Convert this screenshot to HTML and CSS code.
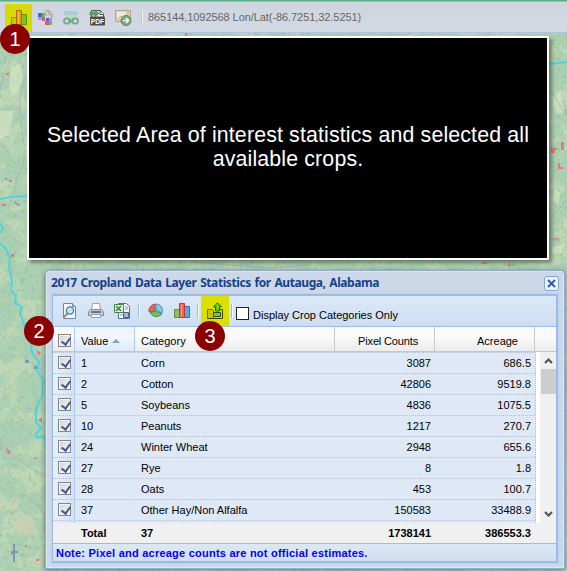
FILE: index.html
```html
<!DOCTYPE html>
<html lang="en">
<head>
<meta charset="utf-8">
<title>Cropland Data Layer Statistics</title>
<link rel="stylesheet" href="styles.css">
</head>
<body>
<svg class="map" viewBox="0 0 567 571" width="567" height="571" aria-hidden="true">
  <defs>
    <filter id="land" x="0" y="0" width="100%" height="100%" color-interpolation-filters="sRGB">
      <feTurbulence type="fractalNoise" baseFrequency=".045" numOctaves="5" seed="8"/>
      <feColorMatrix values="0 0 0 0 .84  0 0 0 0 .88  0 0 0 0 .72  8 0 0 0 -3.9"/>
    </filter>
    <filter id="speck" x="0" y="0" width="100%" height="100%" color-interpolation-filters="sRGB">
      <feTurbulence type="fractalNoise" baseFrequency=".28" numOctaves="3" seed="21"/>
      <feColorMatrix values="0 0 0 0 .6  0 0 0 0 .68  0 0 0 0 .67  0 9 0 0 -5.2"/>
    </filter>
    <filter id="leaf" x="0" y="0" width="100%" height="100%" color-interpolation-filters="sRGB">
      <feTurbulence type="fractalNoise" baseFrequency=".13" numOctaves="4" seed="4"/>
      <feColorMatrix values="0 0 0 0 .64  0 0 0 0 .82  0 0 0 0 .63  0 0 8 0 -4.4"/>
    </filter>
  </defs>
  <rect width="567" height="571" fill="#acd0b3"/>
  <rect width="567" height="571" filter="url(#land)" opacity=".45"/>
  <rect width="567" height="571" filter="url(#leaf)" opacity=".4"/>
  <rect width="567" height="571" filter="url(#speck)" opacity=".35"/>
  <g fill="#d3e2c0" opacity=".75">
    <path d="M12 66l8-2 3 12-4 14-6 6-4-10zM0 111h14l-2 10-4 14-8 4zM553 96l8-6 3 22-6 2-5-6zM555 190l5 2-1 12-6-2zM552 248l12-5-2 10-10 1z"/>
  </g>
  <g fill="#cdd0b3" opacity=".7">
    <path d="M15 520l10-4 9 4 1 12-10 5-9-7zM12 498l8-2-2 12-6 2z"/>
  </g>
  <g fill="none" stroke="#a9a7ae" opacity=".65">
    <path d="M10 60Q2 75 0 90M26 75Q16 95 22 130T18 175L8 210M0 442l14 14 16 12 18 9M12 505q8-18 22-4t10 30M550 90l12 18 5 8M553 215l14-15M190 262l80 6 40-3"/>
  </g>
  <g fill="none" stroke="#4fd4db">
    <path stroke-width="2" d="M0 199l11-2 16-1M549 64l9-1 9-1"/>
    <path stroke-width="2" d="M0 224l3 4-2 5M0 243l6 6 4 9-1 10 3 12-1 11 5 4-1 8 7 4-2 6 4 11 5 12 2 9 1 8 7 9-2 8 6 10-1 17-6 11 0 14 5 6-5 6 1 4 5-2 5 7-2 4 4 10"/>
  </g>
  <g fill="#df7d7d">
    <path d="M6 73h3v2H6zM5 178h2v2H5zM9 180h3v2H9zM2 204h4v2H2zM11 254h3v3h-3zM6 448l5 4-3 3zM37 350l4 3-3 3zM38 420l4-3v6zM34 457l3 1-2 2zM485 261l3 3h-8zM507 266l2-4 3 4 2-4v4zM552 240q4-5 9 0l-3-1zM551 148h6v2h-2v3h-4zM561 142h3v8h-3zM558 163l2 0 0 4 3 0v2h-5zM25 545h2v2h-2zM36 559h3v2h-3zM185 33h2v3h-2z"/>
  </g>
  <path fill="#7f96b2" d="M15 202l5 3-1 1-5-3zM13 544h2v7h3v2h-3v9h-2v-8h-2v-3h2zM25 360h4v3h-4zM34 366h3v3h-3z"/>
</svg>

<header class="appbar">
  <span class="tool active"><svg width="18" height="18" viewBox="0 0 18 18"><path fill="#b9cf08" stroke="#8b9a00" d="M1.500 8.500h5v7h-5z"/><path fill="#85bf22" stroke="#5c9112" d="M11.500 5.500h5v10h-5z"/><path fill="#ec9d06" stroke="#bd6605" d="M6.500 1.500h5v14h-5z"/><path stroke="#f6ca38" d="M8.500 3v12"/></svg></span>
  <span class="tool"><svg width="18" height="18" viewBox="0 0 18 18"><path fill="#4864e8" d="M2 4h4v4H2zM10 9h3v3h-3z"/><path fill="#e8585c" d="M6 8h3v4H6zM9 12h4v4H9z"/><path fill="#5dbd62" d="M6 4h3v4H6zM13 12h3v4h-3z"/><path fill="#b98ae0" d="M2 8h4v3H2zM13 9h3v3h-3z"/><path fill="none" stroke="#b09a8a" d="M9 4q1-4 4-2.500l3 3v4l-2-4-2.500 2M11 1l3 4M9 5l2 1"/></svg></span>
  <span class="tool"><svg width="18" height="18" viewBox="0 0 18 18"><path fill="#a5cfd8" d="M2 2h14v5H2z"/><path fill="#c0dcc0" d="M2 6h14l-2 4H4z"/><g fill="#d4dce0" stroke="#79aa88" stroke-width="1.800"><rect x="2" y="9.500" width="6" height="5" rx="2.500"/><rect x="10" y="9.500" width="6" height="5" rx="2.500"/><path d="M6 12h6"/></g></svg></span>
  <span class="tool"><svg width="18" height="18" viewBox="0 0 18 18"><path fill="#eee" stroke="#555" d="M3.500 1.500h9l3 3.500V9h-12z"/><path fill="#ddd" stroke="#555" d="M12 1.500v4h4"/><rect x="2" y="7.500" width="15" height="9" rx="1" fill="#514a4b"/><path fill="#63a16a" stroke="#397943" stroke-width=".6" d="M2 3h5V1l4 3.500L7 8V6H2z"/><text x="2.800" y="14.800" class="pdf">PDF</text></svg></span>
  <span class="tool"><svg width="18" height="18" viewBox="0 0 18 18"><path fill="#ded3b9" stroke="#b3a58b" d="M1.500 1.500h15v11h-15z"/><path fill="#efe9db" d="M3 3h9v7H3z"/><path stroke="#c9a18b" fill="none" d="M3 11l4-4 3 3M12 4h3"/><circle cx="12" cy="11.500" r="5" fill="#79ad70" stroke="#4c8c57"/><path stroke="#fff" stroke-width="1.600" fill="none" d="M9 11.500h5M12 9l2.500 2.500L12 14"/></svg></span>
  <span class="split"></span>
  <span class="coords">865144,1092568 Lon/Lat(-86.7251,32.5251)</span>
</header>

<section class="banner"><p>Selected Area of interest statistics and selected all<br>available crops.</p></section>

<section class="window">
  <div class="titlebar"><h1>2017 Cropland Data Layer Statistics for Autauga, Alabama</h1>
    <button class="close" aria-label="Close"><svg width="9" height="9" viewBox="0 0 9 9"><path d="M1 1l7 7M8 1L1 8" stroke="#3455a4" stroke-width="1.800"/></svg></button></div>
  <div class="panel">
    <div class="toolbar">
      <span class="act"><svg width="16" height="16" viewBox="0 0 16 16"><path fill="#f5faff" stroke="#6788b5" d="M1.500.5h9l3 3v12h-12z"/><path fill="#b9d2ee" stroke="#6788b5" d="M10.500.5v3h3"/><path stroke="#bd8352" stroke-width="2.200" d="M6 10l-4.500 4.500"/><circle cx="8" cy="7.500" r="3.600" fill="#c4e6fa" stroke="#4778b4" stroke-width="1.300"/></svg></span>
      <span class="act"><svg width="16" height="16" viewBox="0 0 16 16"><path fill="#fff" stroke="#9ba1a8" d="M4.500.5h7l1 7h-9z"/><path fill="#c8c8c7" stroke="#888b8e" d="M2.500 6.500h11l2 2v4H.5v-4z"/><path fill="#777" d="M3 8h10v2H3z"/><path fill="#eef7ff" stroke="#84a6ce" d="M3.500 11.500h9v3h-9z"/></svg></span>
      <span class="act"><svg width="16" height="16" viewBox="0 0 16 16"><path fill="#f8fbff" stroke="#4e719f" d="M4.500.5h8l3 3v12h-11z"/><path fill="#edf6e8" stroke="#438249" d="M.5 1.500h9v8h-9z"/><path stroke="#398247" stroke-width="1.600" d="M2 3l5 5M7 3L2 8"/><path fill="#a5bbd7" stroke="#48648d" d="M9.500 9.500h5v5h-5z"/><path stroke="#799bc5" d="M11 4h3M11 6h3M6 12h3"/></svg></span>
      <span class="sep"></span>
      <span class="act"><svg width="16" height="16" viewBox="0 0 16 16"><path fill="#e5675c" stroke="#c34540" d="M7 8V1A7 7 0 0 0 1 9z"/><path fill="#87c9e6" stroke="#478fb5" d="M8 7V1a6.500 6.500 0 0 1 6 9z"/><path fill="#78bd67" stroke="#479549" d="M7 8l7 3q-6 6-12-1z"/></svg></span>
      <span class="act"><svg width="16" height="16" viewBox="0 0 16 16"><path fill="#8bc65c" stroke="#5b9437" d="M.5 6.500h5v8h-5z"/><path fill="#56a9dc" stroke="#2b72ad" d="M10.500 3.500h5v11h-5z"/><path fill="#ed6659" stroke="#c73530" d="M5.500.5h5v14h-5z"/><path stroke="#ffaaa0" d="M7.500 2v12"/></svg></span>
      <span class="sep sep2"></span>
      <span class="act marked"><svg width="18" height="18" viewBox="0 0 18 18"><path fill="#c9c800" stroke="#6a7200" d="M1.500 7.500h5l1 1v8h-6z"/><path fill="#77ca30" stroke="#344d00" d="M7.500 10.500h7v4h-7z"/><path fill="none" stroke="#374600" d="M1.500 16.500h15v-9h-3"/><path fill="#6bd21b" stroke="#286400" d="M11.500.8l4 4h-2V9h-4V4.800h-2z"/></svg></span>
      <span class="sep sep3"></span>
      <span class="only"></span><label>Display Crop Categories Only</label>
    </div>
    <div class="grid head"><span class="chk"><i></i></span><span class="sorted">Value<svg width="8" height="4" viewBox="0 0 8 4"><path fill="#7aa2cf" d="M0 4l4-4 4 4z"/></svg></span><span>Category</span><span class="n">Pixel Counts</span><span class="n">Acreage</span><span></span></div>
    <div class="body">
      <div class="rows">
        <div class="grid row"><span class="chk"><i></i></span><span>1</span><span>Corn</span><span class="n">3087</span><span class="n">686.5</span></div>
        <div class="grid row"><span class="chk"><i></i></span><span>2</span><span>Cotton</span><span class="n">42806</span><span class="n">9519.8</span></div>
        <div class="grid row"><span class="chk"><i></i></span><span>5</span><span>Soybeans</span><span class="n">4836</span><span class="n">1075.5</span></div>
        <div class="grid row"><span class="chk"><i></i></span><span>10</span><span>Peanuts</span><span class="n">1217</span><span class="n">270.7</span></div>
        <div class="grid row"><span class="chk"><i></i></span><span>24</span><span>Winter Wheat</span><span class="n">2948</span><span class="n">655.6</span></div>
        <div class="grid row"><span class="chk"><i></i></span><span>27</span><span>Rye</span><span class="n">8</span><span class="n">1.8</span></div>
        <div class="grid row"><span class="chk"><i></i></span><span>28</span><span>Oats</span><span class="n">453</span><span class="n">100.7</span></div>
        <div class="grid row"><span class="chk"><i></i></span><span>37</span><span>Other Hay/Non Alfalfa</span><span class="n">150583</span><span class="n">33488.9</span></div>
        <div class="grid row"><span class="chk"></span></div>
      </div>
      <div class="scroll"><svg width="9" height="6" viewBox="0 0 9 6"><path d="M1 5l3.500-3.500L8 5"/></svg><b></b><svg class="down" width="9" height="6" viewBox="0 0 9 6"><path d="M1 1l3.500 3.500L8 1"/></svg></div>
    </div>
    <div class="grid total"><span></span><span>Total</span><span>37</span><span class="n">1738141</span><span class="n">386553.3</span></div>
    <div class="note">Note: Pixel and acreage counts are not official estimates.</div>
  </div>
</section>
<span class="badge one">1</span><span class="badge two">2</span><span class="badge three">3</span>
</body>
</html>
```
FILE: styles.css
```css
* { box-sizing: border-box; }
body { margin: 0; width: 567px; height: 571px; overflow: hidden; position: relative; font: 11px/13px "Liberation Sans", Arial, sans-serif; color: #000; }
svg { display: block; flex: none; }
.map { position: absolute; left: 0; top: 0; }

.appbar { position: relative; height: 33px; display: flex; align-items: center; padding: 3px 0 1px 5px; border-top: 1px solid #5fae8b; border-bottom: 1px solid #b1c3dd; background: linear-gradient(#cfd5de, #d2d9e2); box-shadow: inset 0 1px #8cbba7, inset 0 2px #d9dee3; }
.tool { width: 26px; height: 28px; display: flex; align-items: center; justify-content: center; }
.tool.active { width: 27px; background: #d5da05; }
.pdf { font: bold 6.700px "Liberation Sans", Arial, sans-serif; fill: #fff; }
.split { width: 2px; height: 13px; margin-left: 5px; background: #b6c8df; border-right: 1px solid #eef2f7; }
.coords { margin-left: 5px; color: #666; letter-spacing: -.07px; }

.banner { position: absolute; left: 27px; top: 36px; width: 522px; height: 224px; border: 2px solid #fff; background: #000; color: #fff; display: flex; align-items: center; justify-content: center; text-align: center; box-shadow: 3px 3px 4px rgba(40,60,40,.55); }
.banner p { margin: 0 0 2px; font-size: 21.330px; letter-spacing: .15px; line-height: 24px; white-space: nowrap; }

.window { position: absolute; left: 45px; top: 270px; width: 520px; height: 299px; border: 1px solid #92abd0; border-radius: 4px 4px 1px 1px; padding: 0 6px 5px; background: #ccd8e8; box-shadow: inset 0 0 0 1px #dce7f4, 0 1px 5px rgba(50,70,60,.6); display: flex; flex-direction: column; }
.titlebar { flex: none; height: 23px; display: flex; align-items: center; justify-content: space-between; }
.titlebar h1 { margin: 0 0 0 -1px; font: bold 12px/14px "Noto Sans", "Open Sans", sans-serif; letter-spacing: -.42px; word-spacing: 1px; color: #15428b; white-space: nowrap; }
.close { width: 15px; height: 15px; padding: 0; margin: 1px -1px 0 0; display: grid; place-items: center; border: 1px solid #7fa7db; border-radius: 3px; background: #eaf2fc; }
.panel { flex: 1; display: flex; flex-direction: column; border: 1px solid #99bce8; border-width: 2px 2px 2px 1px; outline: 1px solid #bdd1ea; outline-offset: 0; background: #f0f0f0; }
.toolbar { flex: none; height: 31px; display: flex; align-items: center; padding-left: 9px; background: linear-gradient(#dce8f7, #cedef1); border-bottom: 1px solid #99bce8; white-space: nowrap; }
.act { width: 26px; display: flex; }
.sep { width: 2px; height: 14px; background: #98bce8; border-right: 1px solid #fff; margin: 0 8px 0 -2px; }
.sep2 { margin: 0 2px 0 -3px; }
.marked { width: 28px; height: 30px; align-items: center; justify-content: center; background: #dce000; }
.sep3 { margin: 0 3px 0 2px; }
.only { width: 13px; height: 13px; margin-top: 5px; border: 1px solid #222; background: #fff; }
.toolbar label { margin: 9px 0 0 4px; }

.grid { display: grid; grid-template-columns: 22px 60px 200px 100px 100px 1fr; flex: none; }
.grid > span { padding-left: 6px; white-space: nowrap; }
.grid > .chk { padding: 3px 0 0 5px; }
.grid > .n { text-align: right; padding-right: 4px; }
.chk i { display: block; position: relative; width: 13px; height: 13px; border: 1px solid #858585; background: linear-gradient(135deg, #cbcfd5, #fff); box-shadow: inset 0 0 0 1px #f4f4f4; }
.chk i::after { content: ""; position: absolute; left: 4px; top: 1px; width: 4px; height: 7px; border: solid #45578f; border-width: 0 2px 2px 0; transform: rotate(35deg); }
.head { height: 25px; background: linear-gradient(#fafafa 40%, #ececec); border-bottom: 1px solid #c5c5c5; line-height: 28px; }
.head > span { border-right: 1px solid #c9c9c9; height: 24px; }
.head > .chk { padding-top: 7px; border-color: #aaccf6; }
.head > .n { padding-right: 16px; }
.head > .n:nth-child(4) { letter-spacing: -.15px; }
.head > .sorted { display: flex; align-items: center; gap: 4px; padding-top: 4px; background: linear-gradient(#f0f6fd 45%, #dceafb); border-color: #aaccf6; }
.head > span:last-child { border: 0; }
.body { flex: none; height: 171px; display: flex; justify-content: space-between; overflow: hidden; background: #fff; }
.rows { width: 483px; overflow: hidden; }
.row { height: 21px; background: #dfe8f6; border-top: 1px dotted #a9bfe5; border-right: 1px dotted #a9bfe5; line-height: 21px; }
.row > .chk { border-right: 1px solid #aaccf6; height: 20px; background: linear-gradient(90deg, #e7effb, #d3e3f8); }
.scroll { width: 16px; background: #f0f0f0; display: flex; flex-direction: column; align-items: center; padding: 6px 0; }
.scroll path { fill: none; stroke: #505050; stroke-width: 2; }
.scroll b { width: 15px; height: 25px; margin-top: 5px; background: #cdcdcd; }
.scroll .down { margin-top: auto; }
.total { height: 20px; line-height: 21px; font-weight: bold; background: #f0f0f0; }
.note { flex: 1; padding: 2px 0 0 3px; font-weight: bold; line-height: 15px; letter-spacing: .23px; color: #0000f5; background: linear-gradient(#dce8f6, #d0deee); border-top: 1px solid #99bce8; }

.badge { position: absolute; width: 30px; height: 30px; border-radius: 50%; background: #8b0000; color: #fff; font: 20px/30px "Liberation Sans", Arial, sans-serif; text-align: center; }
.one { left: 0; top: 24px; }
.two { left: 24px; top: 316px; }
.three { left: 195px; top: 321px; }
```
